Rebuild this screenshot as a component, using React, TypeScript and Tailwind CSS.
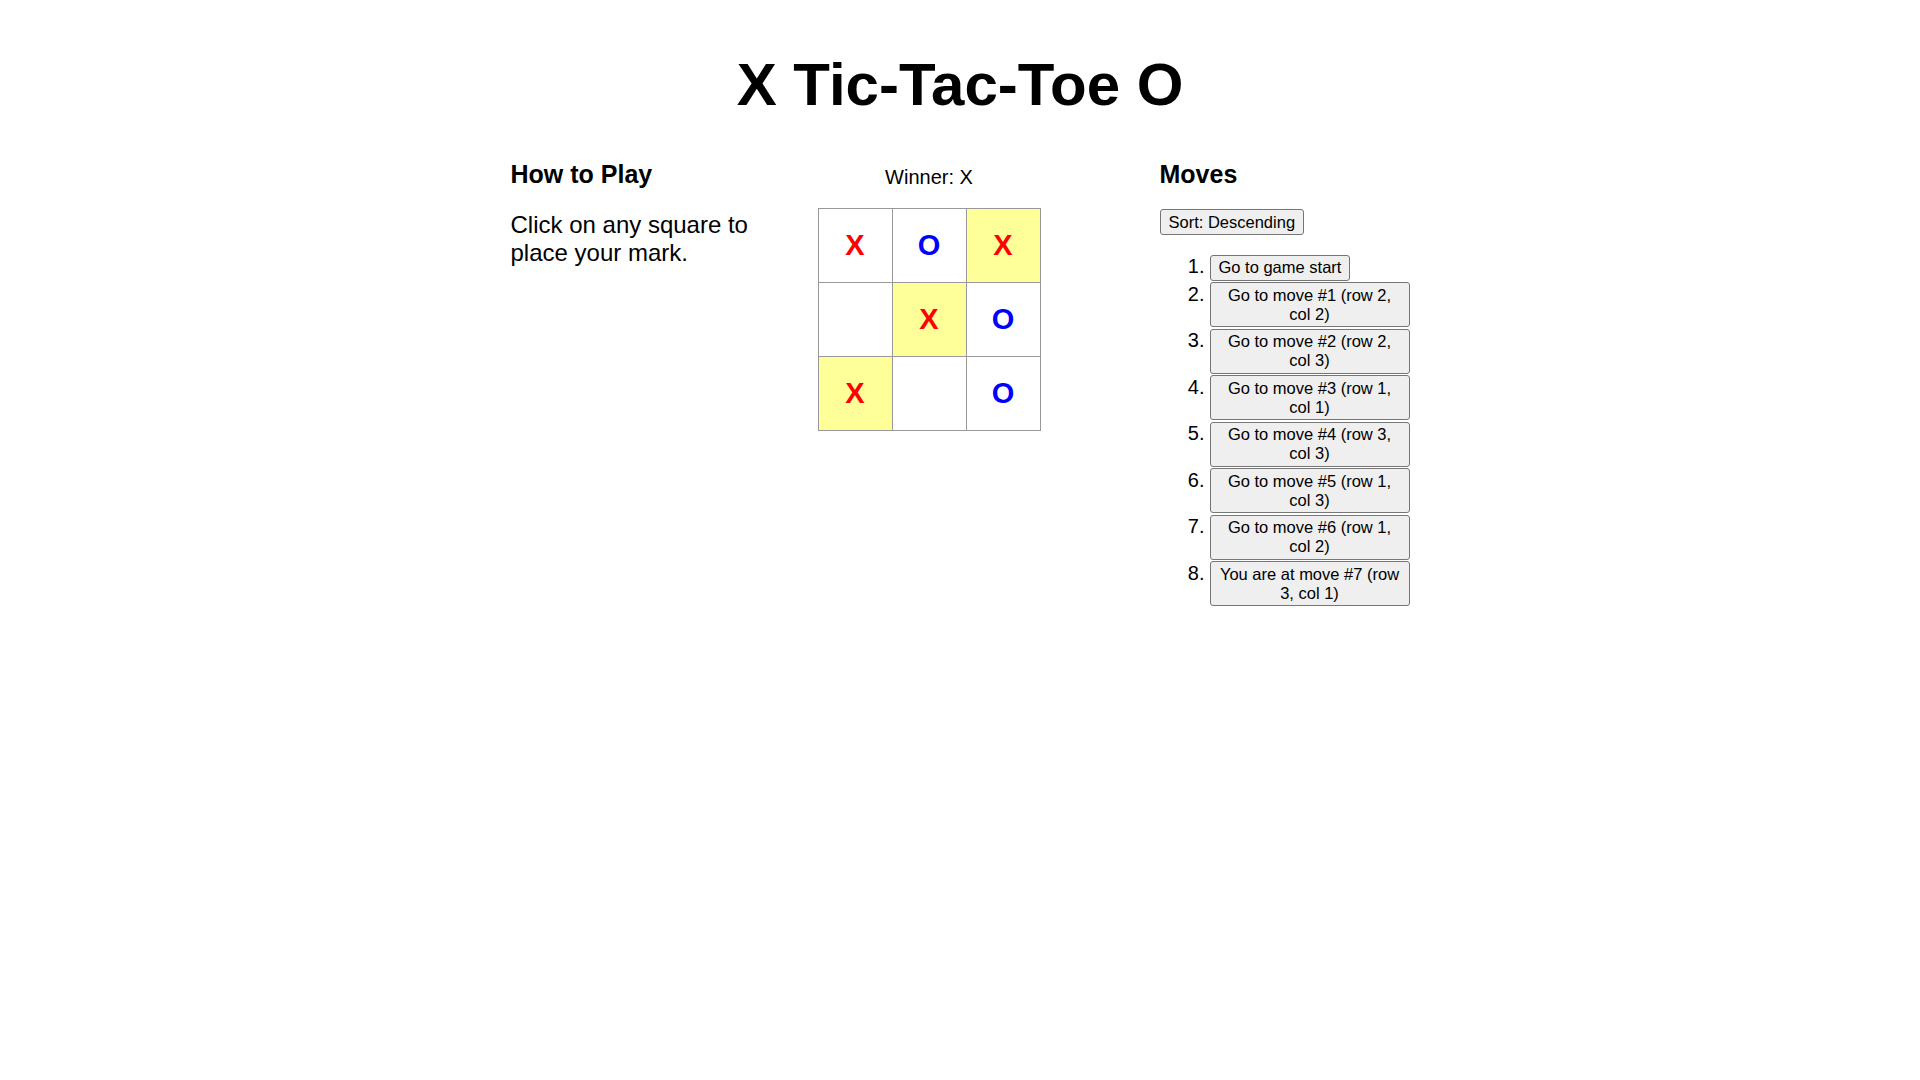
import React from "react";

type Mark = "X" | "O" | null;

const squares: Mark[] = ["X", "O", "X", null, "X", "O", "X", null, "O"];
const winLine = [2, 4, 6];

const moves = [
  "Go to game start",
  "Go to move #1 (row 2, col 2)",
  "Go to move #2 (row 2, col 3)",
  "Go to move #3 (row 1, col 1)",
  "Go to move #4 (row 3, col 3)",
  "Go to move #5 (row 1, col 3)",
  "Go to move #6 (row 1, col 2)",
  "You are at move #7 (row 3, col 1)",
];

const btn =
  "bg-[#efefef] border border-[#767676] rounded-[3px] px-2 py-[2.5px] text-[16.5px] leading-[1.15] text-black text-center";

function Square({ value, highlight }: { value: Mark; highlight: boolean }) {
  return (
    <div
      className={`w-[74px] h-[74px] border-r border-b border-[#999] flex items-center justify-center text-[29px] leading-[1.15] font-bold ${
        highlight ? "bg-[#ffff99]" : "bg-white"
      } ${value === "X" ? "text-[#ff0000]" : "text-[#0000ff]"}`}
    >
      {value}
    </div>
  );
}

export default function App() {
  return (
    <div className="min-h-screen bg-white text-black font-['Liberation_Sans',Arial,sans-serif]">
      <h1 className="pt-[50px] text-[60px] leading-[69px] font-bold text-center">
        X Tic-Tac-Toe O
      </h1>

      <div className="mt-[41px] flex justify-center items-start">
        {/* how to play */}
        <div className="w-[250px]">
          <h2 className="text-[25px] leading-[28px] font-bold">How to Play</h2>
          <p className="mt-[23px] text-[24px] leading-[1.15]">
            Click on any square to place your mark.
          </p>
        </div>

        {/* board */}
        <div className="ml-[57px] w-[223px]">
          <div className="pt-[6px] text-[20px] leading-[1.15] text-center">
            Winner: X
          </div>
          <div className="mt-[19px] grid grid-cols-3 w-fit border-l border-t border-[#999]">
            {squares.map((v, i) => (
              <Square key={i} value={v} highlight={winLine.includes(i)} />
            ))}
          </div>
        </div>

        {/* moves */}
        <div className="ml-[119px] w-[250px]">
          <h2 className="text-[25px] leading-[28px] font-bold">Moves</h2>
          <button className={`mt-[21px] ${btn}`}>Sort: Descending</button>
          <ol className="mt-[20px] flex flex-col gap-[1.5px]">
            {moves.map((m, i) => (
              <li key={i} className="flex items-baseline">
                <span className="w-[45px] text-right text-[20px] leading-[1.15]">
                  {i + 1}.
                </span>
                <button className={`ml-[5px] max-w-[200px] ${btn}`}>{m}</button>
              </li>
            ))}
          </ol>
        </div>
      </div>
    </div>
  );
}
